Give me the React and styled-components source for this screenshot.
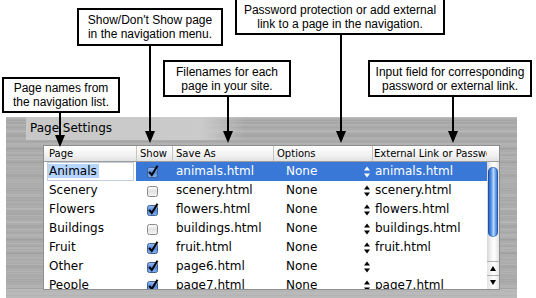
import React from "react";
import styled, { createGlobalStyle } from "styled-components";

const GlobalStyle = createGlobalStyle`
  html, body {
    margin: 0;
    padding: 0;
    background: #fff;
  }
`;

const Page = styled.div`
  position: relative;
  width: 536px;
  height: 298px;
  overflow: hidden;
  background: #fff;
  font-family: "DejaVu Sans", sans-serif;
`;

// annotation canvas above the panel: callouts sit at their own spots
const Annotations = styled.div`
  position: relative;
  height: 117px;
  z-index: 2;
`;

const Callout = styled.div`
  position: absolute;
  left: ${(p) => p.$x}px;
  top: ${(p) => p.$y}px;
  width: ${(p) => p.$w}px;
  height: ${(p) => p.$h}px;
  box-sizing: border-box;
  border: 2px solid #000;
  background: #fff;
  display: flex;
  align-items: center;
  justify-content: center;
  text-align: center;
  font-family: "Liberation Sans", Arial, sans-serif;
  font-size: 12px;
  line-height: 14px;
  color: #000;
`;

const Pointer = styled.div`
  position: absolute;
  left: ${(p) => p.$x - 5}px;
  top: ${(p) => p.$from}px;
  width: 10px;
  height: ${(p) => p.$to - p.$from}px;

  &::before {
    content: "";
    position: absolute;
    left: 4px;
    top: 0;
    bottom: 11px;
    width: 2px;
    background: #000;
  }

  &::after {
    content: "";
    position: absolute;
    left: 0;
    bottom: 0;
    border-left: 5px solid transparent;
    border-right: 5px solid transparent;
    border-top: 12px solid #000;
  }
`;

const Panel = styled.div`
  margin-left: 6px;
  width: 511px;
  height: 181px;
  display: flex;
  flex-direction: column;
  background:
    linear-gradient(180deg, transparent 172px, rgba(255, 255, 255, 0.16) 172px),
    repeating-linear-gradient(180deg, rgba(255,255,255,0.09) 0 1px, transparent 1px 3px, rgba(0,0,0,0.04) 3px 4px, transparent 4px 7px),
    repeating-linear-gradient(180deg, rgba(255,255,255,0.07) 0 2px, transparent 2px 5px, rgba(0,0,0,0.035) 5px 7px, transparent 7px 13px),
    #acacac;
`;

const TitleBand = styled.div`
  margin-left: 20px;
  width: 219px;
  height: 23px;
  padding-left: 4px;
  box-sizing: border-box;
  background: linear-gradient(90deg, #c8c8c8 0%, #cbcbcb 80%, rgba(200, 200, 200, 0) 100%);
  font-size: 12px;
  line-height: 23px;
  color: #000;
`;

const Table = styled.div`
  margin: 6px 0 0 38px;
  width: 455px;
  height: 143px;
  display: flex;
  flex-direction: column;
  background: #fff;
  box-shadow: 0 0 0 1px #8e8e8e;
`;

const cols = "92px 36px 101px 99px 115px 12px";

const HeaderRow = styled.div`
  display: grid;
  grid-template-columns: ${cols};
  height: 16px;
  box-sizing: border-box;
  border-bottom: 1px solid #9c9c9c;
  background: linear-gradient(180deg, #ffffff 0%, #f3f3f3 55%, #e2e2e2 100%);
`;

const HeaderCell = styled.div`
  padding-left: ${(p) => p.$pad ?? 3}px;
  border-left: ${(p) => (p.$first ? "none" : "1px solid #c4c4c4")};
  font-size: 10px;
  line-height: 15px;
  color: #000;
  white-space: nowrap;
  overflow: hidden;
`;

const Body = styled.div`
  display: flex;
  height: 127px;
`;

const Rows = styled.div`
  width: 443px;
  overflow: hidden;
`;

const Row = styled.div`
  display: grid;
  grid-template-columns: 92px 36px 101px 99px 115px;
  height: 19px;
  font-size: 12px;
  line-height: 19px;
  color: ${(p) => (p.$selected ? "#fff" : "#000")};
`;

const Cell = styled.div`
  padding-left: ${(p) => p.$pad ?? 4}px;
  white-space: nowrap;
  overflow: hidden;
  background: ${(p) => (p.$selected ? "#3a78d8" : "transparent")};
`;

const CheckCell = styled.div`
  display: flex;
  align-items: center;
  justify-content: center;
  padding-right: 3px;
  background: ${(p) => (p.$selected ? "#3a78d8" : "transparent")};
`;

const OptionCell = styled.div`
  display: flex;
  align-items: center;
  justify-content: space-between;
  padding: 0 2px 0 13px;
  background: ${(p) => (p.$selected ? "#3a78d8" : "transparent")};
`;

const EditField = styled.div`
  margin: 0 2px 0 3px;
  height: 19px;
  box-sizing: border-box;
  border: 1px solid #c3cedd;
  background: #fff;
  color: #000;
  line-height: 17px;
`;

const Highlight = styled.span`
  background: #b5d5ff;
  padding: 0 2px 0 1px;
`;

const Scrollbar = styled.div`
  width: 12px;
  display: flex;
  flex-direction: column;
  background: linear-gradient(90deg, #d6d6d6 0%, #f4f4f4 35%, #ffffff 60%, #e2e2e2 100%);
`;

const Thumb = styled.div`
  margin: 5px 1px 0;
  height: 70px;
  border-radius: 5px;
  background: linear-gradient(90deg, #1f57bd 0%, #4f8ce2 30%, #b8d7fa 55%, #5894e6 80%, #2560c6 100%);
  box-shadow: inset 0 0 0 1px rgba(20, 60, 140, 0.45);
`;

const TrackGap = styled.div`
  flex: 1;
`;

const ScrollButton = styled.div`
  height: 13px;
  display: flex;
  align-items: center;
  justify-content: center;
  border-top: 1px solid #b0b0b0;
  background: linear-gradient(90deg, #e4e4e4, #ffffff 55%, #e8e8e8);
`;

function Stepper() {
  return (
    <svg width="6" height="12" viewBox="0 0 6 12">
      <path d="M0 4.5 L3 0.5 L6 4.5 Z M0 7.5 L3 11.5 L6 7.5 Z" fill="currentColor" />
    </svg>
  );
}

function Check({ on }) {
  return (
    <svg width="13" height="13" viewBox="0 0 13 13">
      <defs>
        <linearGradient id="cbOn" x1="0" y1="0" x2="0" y2="1">
          <stop offset="0" stopColor="#9cc2f2" />
          <stop offset="0.5" stopColor="#4f88de" />
          <stop offset="1" stopColor="#86b4f0" />
        </linearGradient>
        <linearGradient id="cbOff" x1="0" y1="0" x2="0" y2="1">
          <stop offset="0" stopColor="#fdfdfd" />
          <stop offset="0.5" stopColor="#e2e2e2" />
          <stop offset="1" stopColor="#f7f7f7" />
        </linearGradient>
      </defs>
      <rect
        x="1.5"
        y="2.5"
        width="10"
        height="10"
        rx="2"
        fill={on ? "url(#cbOn)" : "url(#cbOff)"}
        stroke={on ? "#3f5f96" : "#8a8a8a"}
      />
      {on && (
        <path d="M3.2 6.8 L5.8 10 L11.5 0.8" fill="none" stroke="#000" strokeWidth="2" />
      )}
    </svg>
  );
}

const pages = [
  { name: "Animals", show: true, file: "animals.html", link: "animals.html" },
  { name: "Scenery", show: false, file: "scenery.html", link: "scenery.html" },
  { name: "Flowers", show: true, file: "flowers.html", link: "flowers.html" },
  { name: "Buildings", show: false, file: "buildings.html", link: "buildings.html" },
  { name: "Fruit", show: true, file: "fruit.html", link: "fruit.html" },
  { name: "Other", show: true, file: "page6.html", link: "" },
  { name: "People", show: true, file: "page7.html", link: "page7.html" },
];

export default function App() {
  return (
    <Page>
      <GlobalStyle />
      <Annotations>
        <Pointer $x={60} $from={110} $to={147} />
        <Pointer $x={150} $from={44} $to={143} />
        <Pointer $x={228} $from={95} $to={143} />
        <Pointer $x={341} $from={33} $to={143} />
        <Pointer $x={453} $from={95} $to={143} />

        <Callout $x={2} $y={77} $w={118} $h={36}>
          Page names from<br />the navigation list.
        </Callout>
        <Callout $x={77} $y={8} $w={146} $h={38}>
          Show/Don't Show page<br />in the navigation menu.
        </Callout>
        <Callout $x={163} $y={60} $w={128} $h={37}>
          Filenames for each<br />page in your site.
        </Callout>
        <Callout $x={235} $y={-2} $w={210} $h={37}>
          Password protection or add external<br />link to a page in the navigation.
        </Callout>
        <Callout $x={368} $y={60} $w={164} $h={37}>
          Input field for corresponding<br />password or external link.
        </Callout>
      </Annotations>

      <Panel>
        <TitleBand>Page Settings</TitleBand>
        <Table>
          <HeaderRow>
            <HeaderCell $first $pad={5}>Page</HeaderCell>
            <HeaderCell>Show</HeaderCell>
            <HeaderCell>Save As</HeaderCell>
            <HeaderCell>Options</HeaderCell>
            <HeaderCell $pad={1}>External Link or Password</HeaderCell>
            <HeaderCell $first />
          </HeaderRow>
          <Body>
            <Rows>
              {pages.map((p, i) => {
                const sel = i === 0;
                return (
                  <Row key={p.name} $selected={sel}>
                    {sel ? (
                      <EditField>
                        <Highlight>{p.name}</Highlight>
                      </EditField>
                    ) : (
                      <Cell $pad={5}>{p.name}</Cell>
                    )}
                    <CheckCell $selected={sel}>
                      <Check on={p.show} />
                    </CheckCell>
                    <Cell $selected={sel}>{p.file}</Cell>
                    <OptionCell $selected={sel}>
                      <span>None</span>
                      <Stepper />
                    </OptionCell>
                    <Cell $selected={sel} $pad={3}>{p.link}</Cell>
                  </Row>
                );
              })}
            </Rows>
            <Scrollbar>
              <Thumb />
              <TrackGap />
              <ScrollButton>
                <svg width="6" height="5" viewBox="0 0 6 5">
                  <path d="M0 5 L3 0 L6 5 Z" fill="#000" />
                </svg>
              </ScrollButton>
              <ScrollButton>
                <svg width="6" height="5" viewBox="0 0 6 5">
                  <path d="M0 0 L3 5 L6 0 Z" fill="#000" />
                </svg>
              </ScrollButton>
            </Scrollbar>
          </Body>
        </Table>
      </Panel>
    </Page>
  );
}
